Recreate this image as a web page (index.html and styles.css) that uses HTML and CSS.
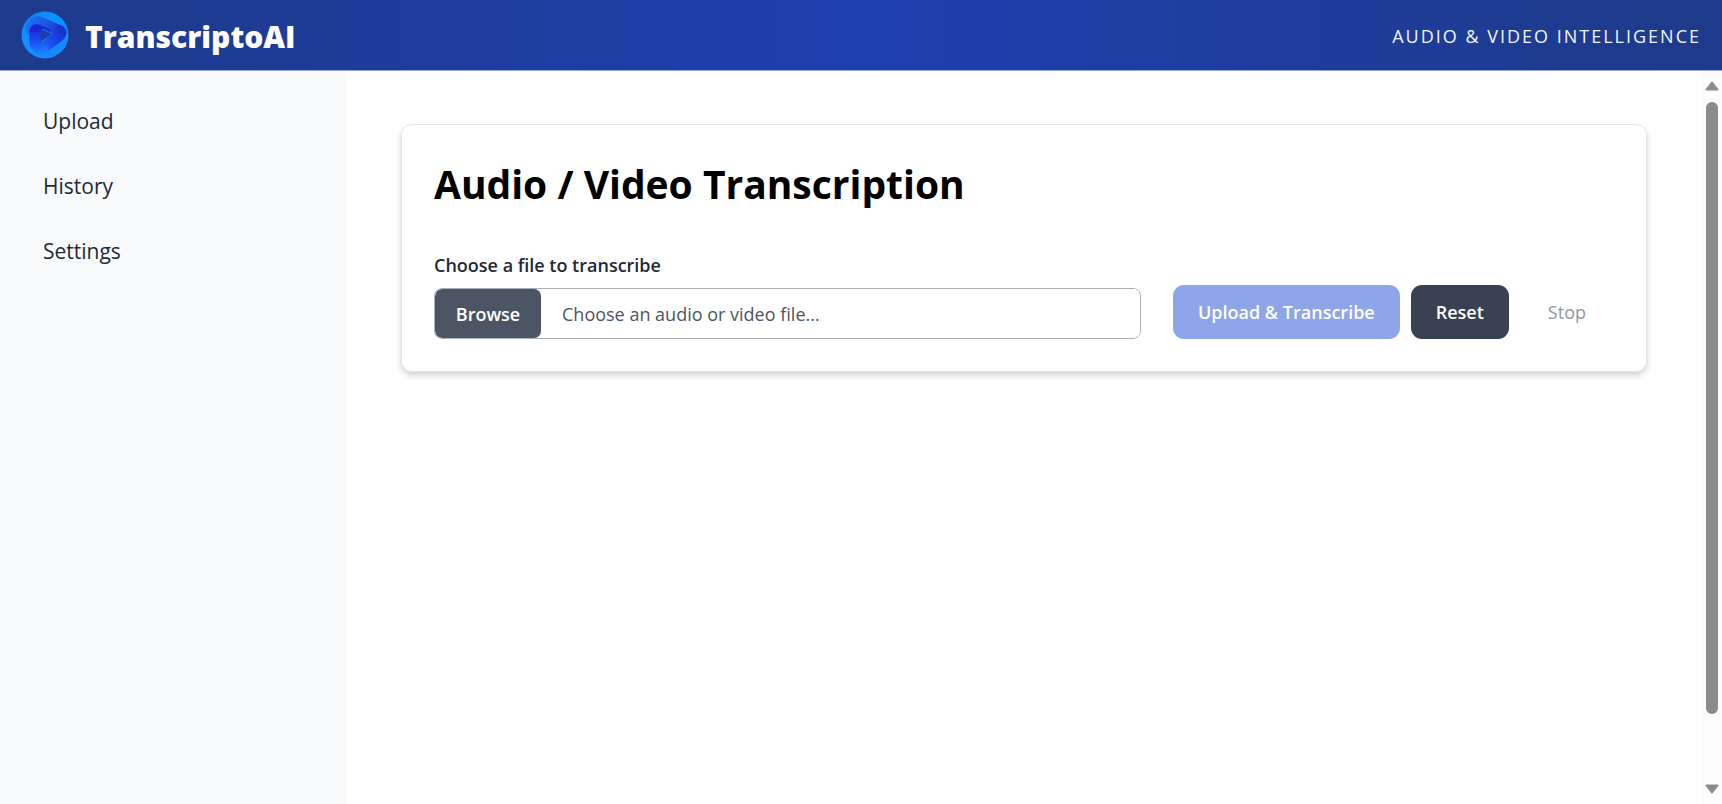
FILE: index.html
```
<!DOCTYPE html>
<html lang="en">
<head>
<meta charset="utf-8">
<meta name="viewport" content="width=device-width, initial-scale=1">
<title>TranscriptoAI</title>
<link rel="stylesheet" href="styles.css">
</head>
<body>
<header class="topbar">
  <div class="brand">
    <svg class="logo" viewBox="0 0 48 48" aria-hidden="true">
      <defs>
        <linearGradient id="disc" x1="0" y1="0" x2="1" y2="1">
          <stop offset="0" stop-color="#1283fa"/>
          <stop offset="0.4" stop-color="#0b93ff"/>
          <stop offset="1" stop-color="#1a86ff"/>
        </linearGradient>
        <linearGradient id="armTop" gradientUnits="userSpaceOnUse" x1="6" y1="16" x2="44" y2="22">
          <stop offset="0" stop-color="#1b72f4"/>
          <stop offset="0.5" stop-color="#1c55e4"/>
          <stop offset="1" stop-color="#1a2fcb"/>
        </linearGradient>
        <linearGradient id="armLow" gradientUnits="userSpaceOnUse" x1="42" y1="20" x2="18" y2="40">
          <stop offset="0" stop-color="#1a2fcb"/>
          <stop offset="0.5" stop-color="#1b4cec"/>
          <stop offset="1" stop-color="#1c78ff"/>
        </linearGradient>
        <linearGradient id="armLeft" gradientUnits="userSpaceOnUse" x1="16" y1="14" x2="18" y2="40">
          <stop offset="0" stop-color="#1a28cf"/>
          <stop offset="0.5" stop-color="#1b42ea"/>
          <stop offset="1" stop-color="#1c78ff"/>
        </linearGradient>
      </defs>
      <circle cx="24" cy="24" r="23.5" fill="url(#disc)"/>
      <path d="M18 17L31 23L18 32Z" fill="#1d3da8"/>
      <g fill="none" stroke-width="11" stroke-linecap="round" stroke-linejoin="round">
        <path d="M10 19C10 12 15 9.500 20 11.500L38 19.500" stroke="url(#armTop)"/>
        <path d="M38.500 19.500C41 21 40 23.500 38 25L24 35.500" stroke="url(#armLow)"/>
        <path d="M14 21V32C14 35 17 37.500 22 36.500" stroke="url(#armLeft)"/>
      </g>
      <path d="M8.500 21C8.500 14 14 12 19 14L30 18.500L29 20.500L23 18C20.500 17 19.500 18.500 19.500 21Z" fill="#1a28cf"/>
    </svg>
    <span class="brand-name">TranscriptoAI</span>
  </div>
  <span class="tagline">AUDIO &amp; VIDEO INTELLIGENCE</span>
</header>
<div class="shell">
  <nav class="sidebar" aria-label="Main">
    <a class="nav-link" href="#upload">Upload</a>
    <a class="nav-link" href="#history">History</a>
    <a class="nav-link" href="#settings">Settings</a>
  </nav>
  <main class="content">
    <section class="card">
      <h1 class="card-title">Audio / Video Transcription</h1>
      <form class="upload-form">
        <div class="field">
          <label class="field-label" for="file-name">Choose a file to transcribe</label>
          <div class="file-box">
            <button class="browse" type="button">Browse</button>
            <input class="file-name" id="file-name" type="text" placeholder="Choose an audio or video file..." readonly>
          </div>
        </div>
        <div class="actions">
          <button class="btn btn-primary" type="submit" disabled>Upload &amp; Transcribe</button>
          <button class="btn btn-dark" type="reset">Reset</button>
          <button class="btn btn-ghost" type="button" disabled>Stop</button>
        </div>
      </form>
    </section>
  </main>
  <div class="scroll-track" aria-hidden="true">
    <svg class="scroll-arrow" viewBox="0 0 14 10"><path d="M7 1.500 12.500 8.500H1.500Z"/></svg>
    <div class="scroll-thumb"></div>
    <svg class="scroll-arrow" viewBox="0 0 14 10"><path d="M7 8.500 1.500 1.500H12.500Z"/></svg>
  </div>
</div>
</body>
</html>
```
FILE: styles.css
```
* {
  box-sizing: border-box;
}

body {
  margin: 0;
  min-height: 100vh;
  display: flex;
  flex-direction: column;
  background: #ffffff;
  color: #1f2937;
  font-family: "Segoe UI", "Open Sans", "Noto Sans", sans-serif;
}

.topbar {
  display: flex;
  align-items: center;
  justify-content: space-between;
  height: 71px;
  padding: 0 21px;
  background: linear-gradient(90deg, #1e3a8a, #1e40af, #1e3a8a);
  border-bottom: 1px solid #93a5dc;
}

.brand {
  display: flex;
  align-items: center;
  gap: 16px;
}

.logo {
  width: 48px;
  height: 48px;
}

.brand-name {
  padding-top: 4px;
  color: #ffffff;
  font-size: 30px;
  font-weight: 800;
  line-height: 40px;
}

.tagline {
  padding-top: 2px;
  color: #eff6ff;
  font-size: 18px;
  letter-spacing: 2px;
}

.shell {
  flex: 1;
  display: flex;
}

.sidebar {
  flex: none;
  width: 347px;
  display: flex;
  flex-direction: column;
  gap: 22px;
  padding: 29px 21px;
  background: #f8fafc;
}

.nav-link {
  padding: 6px 22px;
  color: #1f2937;
  font-size: 21px;
  line-height: 31px;
  text-decoration: none;
}

.content {
  flex: 1;
  padding: 53px 54px;
}

.card {
  padding: 32px;
  border: 1px solid #e2e5e9;
  border-radius: 11px;
  box-shadow: 0 4px 7px rgba(0, 0, 0, 0.12), 0 2px 4px rgba(0, 0, 0, 0.08);
}

.card-title {
  margin: 0 0 41px;
  color: #000000;
  font-size: 39px;
  font-weight: 700;
  line-height: 54px;
}

.upload-form {
  display: flex;
  align-items: flex-end;
  gap: 32px;
}

.field {
  flex: 1;
}

.field-label {
  display: block;
  margin-bottom: 9px;
  color: #1f2937;
  font-size: 18px;
  font-weight: 600;
  line-height: 27px;
}

.file-box {
  display: flex;
  height: 51px;
  border: 1px solid #a9aeb7;
  border-radius: 8px;
  overflow: hidden;
}

.browse {
  width: 106px;
  padding: 2px 0 0;
  border: 0;
  border-radius: 7px;
  background: #4b5563;
  color: #ffffff;
  font: 600 18px/27px "Segoe UI", "Open Sans", "Noto Sans", sans-serif;
}

.file-name {
  flex: 1;
  min-width: 0;
  padding: 2px 21px 0;
  border: 0;
  outline: 0;
  background: #ffffff;
  font: 400 18px/27px "Segoe UI", "Open Sans", "Noto Sans", sans-serif;
}

.file-name::placeholder {
  color: #4b5563;
  opacity: 1;
}

.actions {
  display: flex;
  gap: 11px;
}

.btn {
  height: 54px;
  padding: 1px 25px 0;
  border: 0;
  border-radius: 11px;
  font: 600 18px/27px "Segoe UI", "Open Sans", "Noto Sans", sans-serif;
}

.btn-primary {
  background: #8ea5ea;
  color: #ffffff;
}

.btn-dark {
  background: #374151;
  color: #ffffff;
}

.btn-ghost {
  padding: 1px 28px 0;
  background: transparent;
  color: #94979c;
  font-weight: 500;
}

.scroll-track {
  flex: none;
  width: 21px;
  display: flex;
  flex-direction: column;
  align-items: center;
  padding: 10px 0;
  background: #fcfcfc;
}

.scroll-arrow {
  width: 14px;
  height: 10px;
  fill: #8b8b8b;
  stroke: #8b8b8b;
  stroke-width: 2;
  stroke-linejoin: round;
}

.scroll-thumb {
  width: 12px;
  height: 612px;
  margin: 11px 0 auto;
  border-radius: 6px;
  background: #8b8b8b;
}
```
